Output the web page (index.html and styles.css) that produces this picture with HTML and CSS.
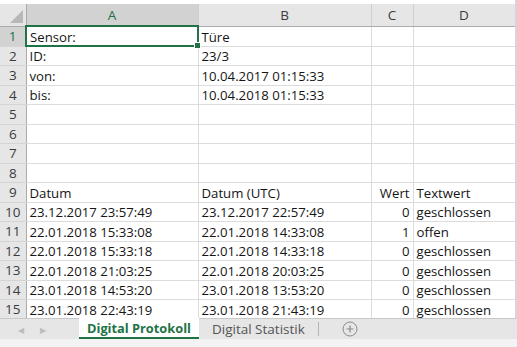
FILE: index.html
```html
<!DOCTYPE html>
<html lang="de">
<head>
  <meta charset="UTF-8">
  <title>Digital Protokoll</title>
  <link rel="stylesheet" href="styles.css">
</head>
<body>
  <div class="window">
    <!-- Grid -->
    <div class="sheet">
      <table>
        <colgroup>
          <col class="col-rh">
          <col class="col-a">
          <col class="col-b">
          <col class="col-c">
          <col class="col-d">
        </colgroup>
        <thead>
          <tr>
            <th class="corner"><span class="tri"></span></th>
            <th class="active">A</th>
            <th>B</th>
            <th>C</th>
            <th>D</th>
          </tr>
        </thead>
        <tbody>
          <tr><th class="rh active">1</th><td class="sel">Sensor:<span class="handle"></span></td><td>Türe</td><td></td><td></td></tr>
          <tr><th class="rh">2</th><td>ID:</td><td>23/3</td><td></td><td></td></tr>
          <tr><th class="rh">3</th><td>von:</td><td>10.04.2017 01:15:33</td><td></td><td></td></tr>
          <tr><th class="rh">4</th><td>bis:</td><td>10.04.2018 01:15:33</td><td></td><td></td></tr>
          <tr><th class="rh">5</th><td></td><td></td><td></td><td></td></tr>
          <tr><th class="rh">6</th><td></td><td></td><td></td><td></td></tr>
          <tr><th class="rh">7</th><td></td><td></td><td></td><td></td></tr>
          <tr><th class="rh">8</th><td></td><td></td><td></td><td></td></tr>
          <tr><th class="rh">9</th><td>Datum</td><td>Datum (UTC)</td><td class="num">Wert</td><td>Textwert</td></tr>
          <tr><th class="rh">10</th><td>23.12.2017 23:57:49</td><td>23.12.2017 22:57:49</td><td class="num">0</td><td>geschlossen</td></tr>
          <tr><th class="rh">11</th><td>22.01.2018 15:33:08</td><td>22.01.2018 14:33:08</td><td class="num">1</td><td>offen</td></tr>
          <tr><th class="rh">12</th><td>22.01.2018 15:33:18</td><td>22.01.2018 14:33:18</td><td class="num">0</td><td>geschlossen</td></tr>
          <tr><th class="rh">13</th><td>22.01.2018 21:03:25</td><td>22.01.2018 20:03:25</td><td class="num">0</td><td>geschlossen</td></tr>
          <tr><th class="rh">14</th><td>23.01.2018 14:53:20</td><td>23.01.2018 13:53:20</td><td class="num">0</td><td>geschlossen</td></tr>
          <tr><th class="rh">15</th><td>23.01.2018 22:43:19</td><td>23.01.2018 21:43:19</td><td class="num">0</td><td>geschlossen</td></tr>
        </tbody>
      </table>
    </div>

    <!-- Sheet tabs -->
    <div class="tabbar">
      <div class="nav">
        <span class="arrow">&#9664;</span>
        <span class="arrow">&#9654;</span>
      </div>
      <div class="tab current">Digital Protokoll</div>
      <div class="tab">Digital Statistik</div>
      <div class="sep"></div>
      <div class="add">
        <svg width="16" height="16" viewBox="0 0 16 16">
          <circle cx="8" cy="8" r="7" fill="none" stroke="#8a8a8a" stroke-width="1"/>
          <path d="M8 4.5v7M4.5 8h7" stroke="#8a8a8a" stroke-width="1.2"/>
        </svg>
      </div>
    </div>
    <div class="status"></div>
  </div>
</body>
</html>
```

FILE: styles.css
```css
body { margin: 0; background: #fff; font-family: "Open Sans", "Liberation Sans", sans-serif; }
.window { width: 517px; height: 347px; overflow: hidden; display: flex; flex-direction: column; }

/* Grid */
.sheet { padding-top: 4px; height: 314px; overflow: hidden; border-right: 2px solid #d6d6d6; width: 515px; }
table { border-collapse: collapse; table-layout: fixed; width: 515px; }
.col-rh { width: 26px; }
.col-a { width: 172px; }
.col-b { width: 173px; }
.col-c { width: 42px; }
.col-d { width: 102px; }
thead th { height: 21px; padding: 0; background: #e6e6e6; color: #3c3c3c; font-weight: normal; font-size: 13.5px; border-right: 1px solid #cfcfcf; border-bottom: 1px solid #ababab; text-align: center; }
thead th.active { background: #d2d2d2; color: #217346; border-bottom: 2px solid #217346; }
.corner { position: relative; border-right: 1px solid #ababab !important; }
.tri { position: absolute; right: 3px; bottom: 3px; width: 0; height: 0; border-left: 13px solid transparent; border-bottom: 13px solid #b8b8b8; }
th.rh { background: #e6e6e6; color: #3c3c3c; font-weight: normal; font-size: 13.5px; padding: 0; text-align: center; border-right: 1px solid #ababab; border-bottom: 1px solid #d4d4d4; }
th.rh.active { background: #d2d2d2; color: #217346; border-right: 2px solid #217346; }
td { height: 18.5px; padding: 0 3px; font-size: 13.2px; color: #151515; white-space: nowrap; overflow: hidden; vertical-align: bottom; line-height: 18px; border-right: 1px solid #dcdcdc; border-bottom: 1px solid #dcdcdc; }
td.num { text-align: right; }
td.sel { position: relative; overflow: visible; outline: 2px solid #217346; outline-offset: -1px; }
.handle { position: absolute; right: -3px; bottom: -3px; width: 5px; height: 5px; background: #217346; border: 1px solid #fff; }

/* Tabs */
.tabbar { height: 20px; background: #e6e6e6; border-top: 1px solid #c8c8c8; display: flex; align-items: stretch; font-size: 13.5px; }
.nav { width: 79px; display: flex; align-items: center; gap: 16px; padding-left: 18px; box-sizing: border-box; }
.arrow { font-size: 8px; color: #bdbdbd; }
.tab { padding: 0 9px; display: flex; align-items: center; color: #555; }
.tab.current { background: #fff; color: #217346; font-weight: bold; font-size: 12.8px; padding: 1px 8px 0; border-bottom: 2px solid #217346; margin-top: -1px; }
.tab + .tab { padding-left: 13px; }
.sep { width: 1px; background: #b5b5b5; margin: 3px 9px 3px 4px; }
.add { display: flex; align-items: center; padding-left: 14px; }
.status { flex: 1; background: #f3f3f3; }
```
